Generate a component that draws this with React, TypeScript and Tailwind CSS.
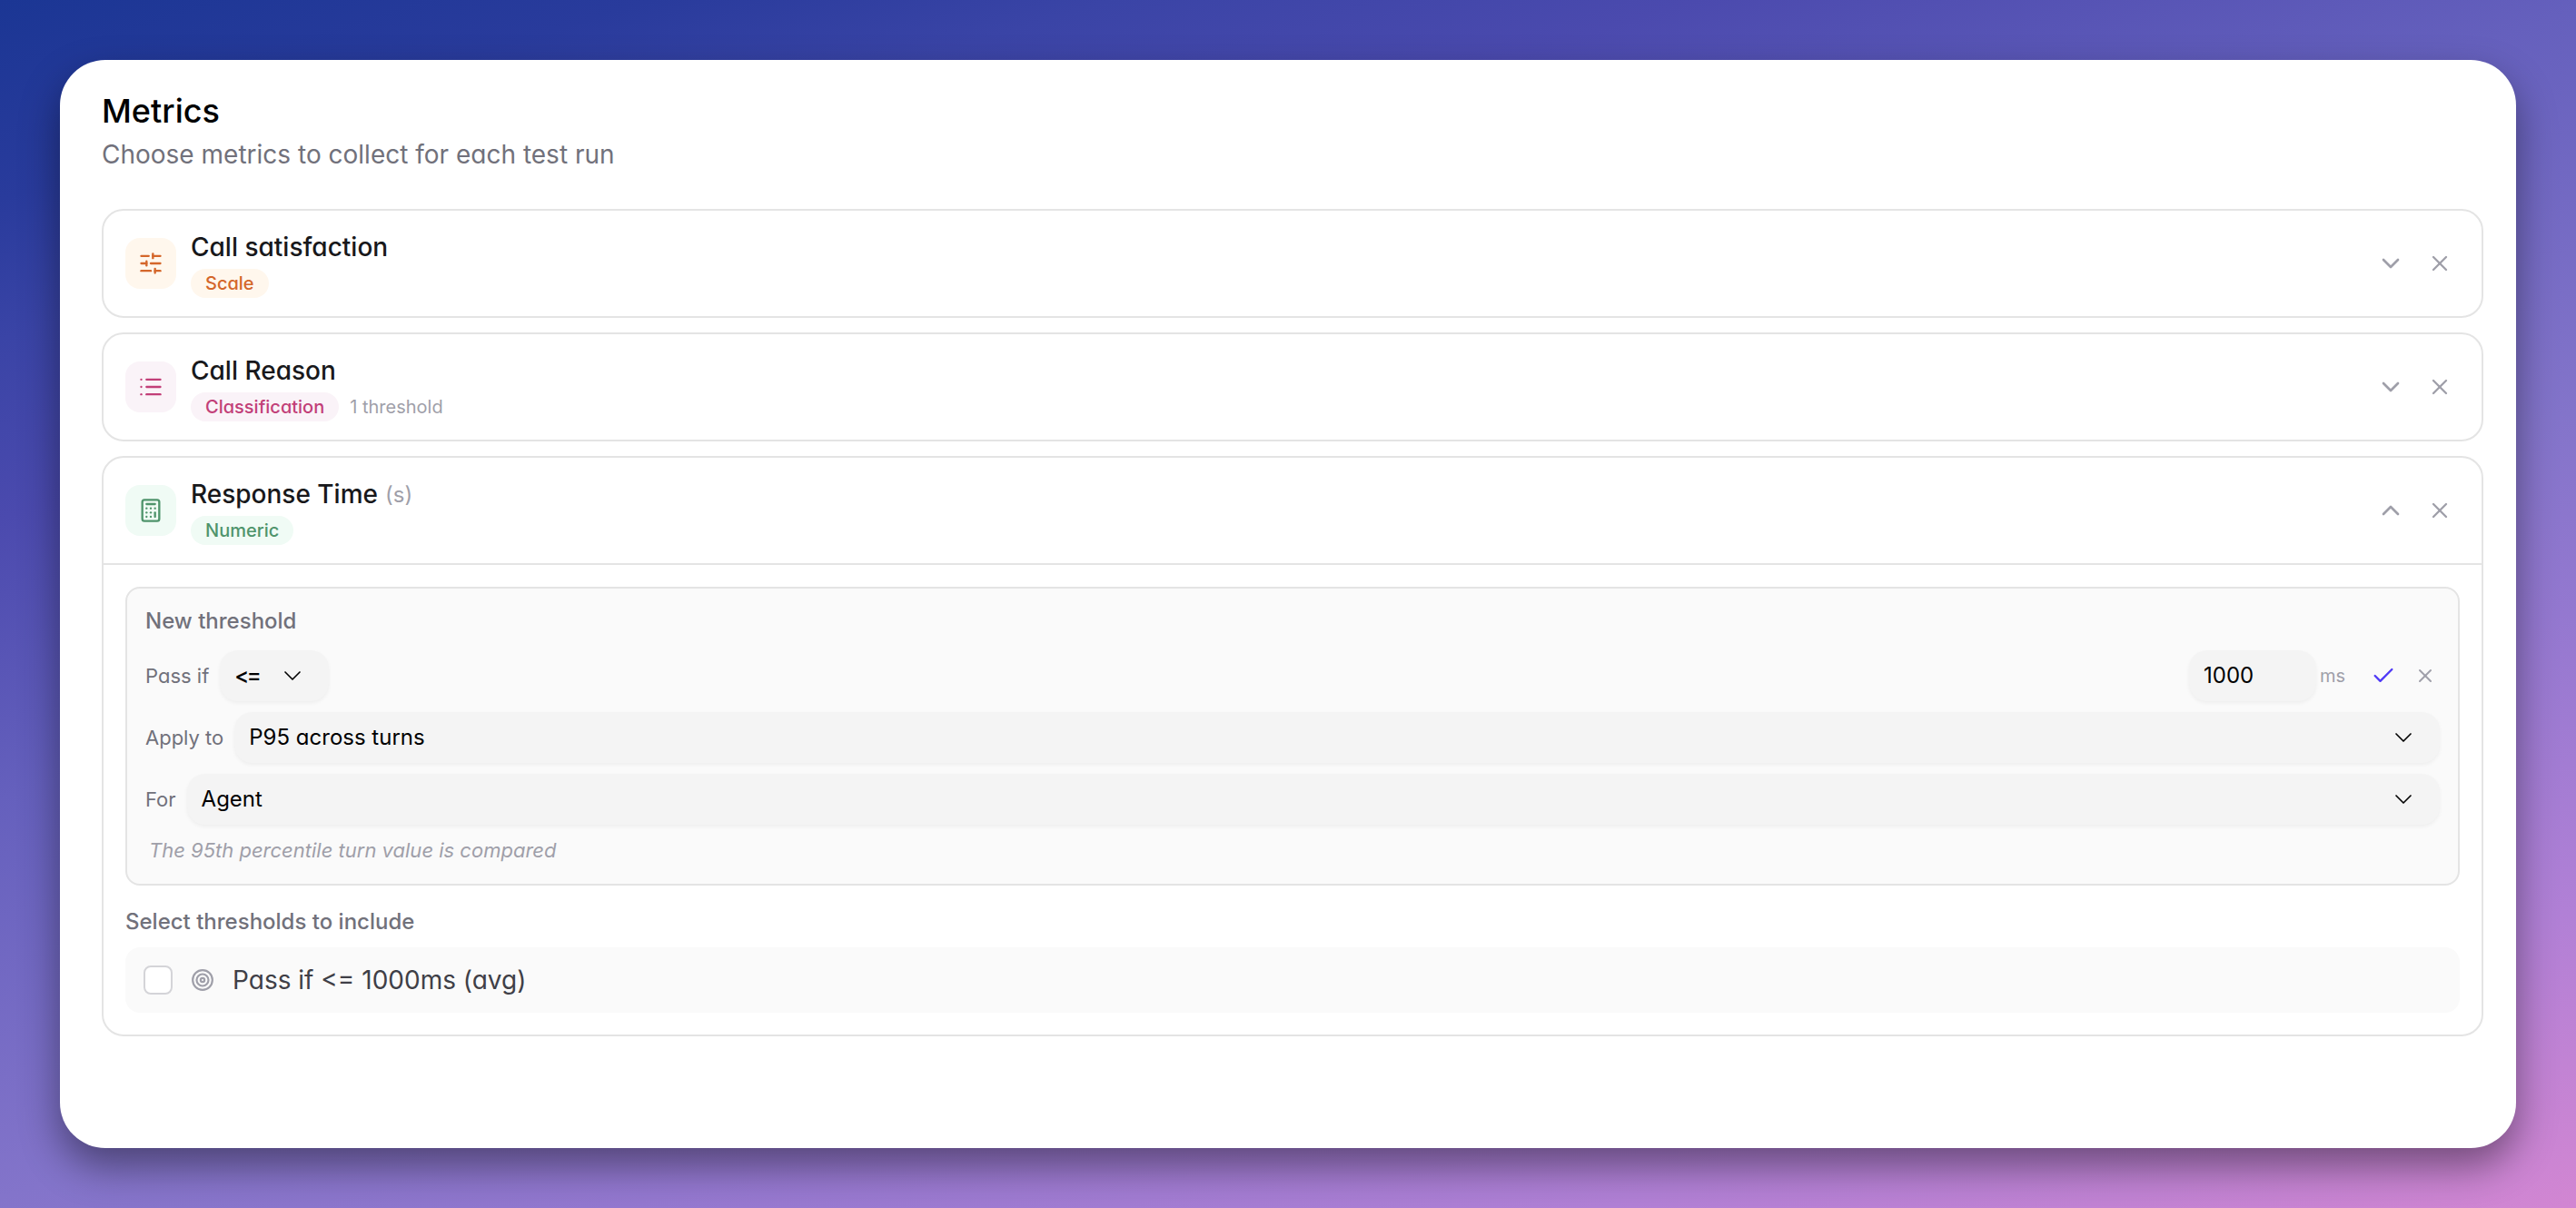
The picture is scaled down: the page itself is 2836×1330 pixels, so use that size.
import {
  Calculator,
  Check,
  ChevronDown,
  ChevronUp,
  List,
  SlidersHorizontal,
  Target,
  X,
  type LucideIcon,
} from "lucide-react";

interface MetricHeaderProps {
  icon: LucideIcon;
  tone: string;
  title: string;
  unit?: string;
  type: string;
  note?: string;
  open?: boolean;
}

const MetricHeader: React.FC<MetricHeaderProps> = ({
  icon: Icon,
  tone,
  title,
  unit,
  type,
  note,
  open,
}) => {
  const Chevron = open ? ChevronUp : ChevronDown;

  return (
    <div className="flex h-[116px] items-center px-6">
      <div
        className={`flex size-14 shrink-0 items-center justify-center rounded-2xl ${tone}`}
      >
        <Icon size={28} />
      </div>
      <div className="ml-4 flex flex-1 flex-col">
        <div className="flex h-10 items-center text-[28px] font-medium text-zinc-900">
          {title}
          {unit && (
            <span className="ml-2 pt-0.5 text-[24px] font-normal text-zinc-400">
              {unit}
            </span>
          )}
        </div>
        <div className="mt-1 flex h-8 items-center gap-3">
          <span
            className={`flex h-8 items-center rounded-full px-4 text-[20px] font-medium ${tone}`}
          >
            {type}
          </span>
          {note && <span className="text-[20px] text-zinc-400">{note}</span>}
        </div>
      </div>
      <div className="flex items-center gap-4 text-zinc-400">
        <Chevron size={32} />
        <button className="p-2">
          <X size={28} />
        </button>
      </div>
    </div>
  );
};

const Select = ({ value, className }: { value: string; className: string }) => (
  <button
    className={`flex h-14 items-center justify-between rounded-[20px] bg-[#f4f4f4] pr-6 pl-4 text-[24px] text-black shadow-[0_2px_4px_rgba(0,0,0,0.05)] ${className}`}
  >
    <span className="pb-0.5">{value}</span>
    <ChevronDown size={32} strokeWidth={1.25} className="shrink-0" />
  </button>
);

const Card = ({ children }: { children: React.ReactNode }) => (
  <div className="rounded-3xl border-2 border-[#e4e4e4]">{children}</div>
);

export default function App() {
  return (
    <div className="h-[1330px] w-[2836px] bg-[linear-gradient(163deg,#1b3694_0%,#293b9c_10%,#3a44a6_17%,#4b4aae_26%,#6560bd_40%,#8374ca_60%,#9478d0_70%,#b180d6_85%,#d286d2_100%)] p-[66px] font-['Inter',sans-serif] [font-feature-settings:'cv11']">
      <div className="h-[1198px] rounded-[50px] bg-white pt-8 pr-9 pl-[46px] shadow-[0_20px_44px_rgba(0,0,0,0.42)]">
        <h1 className="h-12 text-[36px] leading-[48px] font-medium text-black">
          Metrics
        </h1>
        <p className="mt-1 h-10 text-[28px] leading-10 text-zinc-500">
          Choose metrics to collect for each test run
        </p>

        <div className="mt-10 flex flex-col gap-4">
          <Card>
            <MetricHeader
              icon={SlidersHorizontal}
              tone="bg-[#fff7ed] text-[#d4662a]"
              title="Call satisfaction"
              type="Scale"
            />
          </Card>
          <Card>
            <MetricHeader
              icon={List}
              tone="bg-[#faf3f8] text-[#c23f78]"
              title="Call Reason"
              type="Classification"
              note="1 threshold"
            />
          </Card>
          <Card>
            <MetricHeader
              icon={Calculator}
              tone="bg-[#f0fbf5] text-[#4f946c]"
              title="Response Time"
              unit="(s)"
              type="Numeric"
              open
            />
            <div className="border-t-2 border-[#e4e4e4] p-6">
              <div className="flex flex-col gap-3 rounded-2xl border-2 border-[#e4e4e4] bg-[#fafafa] p-5 text-[22px] leading-[33px] text-zinc-500">
                <div className="mb-1 text-[24px] leading-8 font-medium">
                  New threshold
                </div>
                <div className="flex items-center">
                  Pass if
                  <Select
                    value="<="
                    className="ml-3 w-[120px] font-medium tracking-[-2.5px]"
                  />
                  <input
                    className="ml-auto h-14 w-[140px] rounded-[20px] bg-[#f4f4f4] px-4 pb-0.5 text-[24px] text-black shadow-[0_2px_4px_rgba(0,0,0,0.05)]"
                    defaultValue="1000"
                  />
                  <span className="ml-1 w-7 text-[20px] text-zinc-400">ms</span>
                  <button className="ml-6 p-1 text-indigo-600">
                    <Check size={28} />
                  </button>
                  <button className="ml-3 p-1 text-zinc-400">
                    <X size={24} />
                  </button>
                </div>
                <div className="flex items-center gap-3">
                  Apply to
                  <Select value="P95 across turns" className="flex-1" />
                </div>
                <div className="flex items-center gap-3">
                  For
                  <Select value="Agent" className="flex-1" />
                </div>
                <div className="pl-1 text-zinc-400 italic">
                  The 95th percentile turn value is compared
                </div>
              </div>

              <div className="mt-6 text-[24px] leading-8 font-medium text-zinc-500">
                Select thresholds to include
              </div>
              <div className="mt-3 flex h-[72px] items-center rounded-2xl bg-[#fafafa] px-5">
                <span className="size-8 rounded-lg border-2 border-zinc-300 bg-white" />
                <Target size={26} className="ml-5 text-zinc-400" />
                <span className="ml-5 text-[28px] text-zinc-700">
                  Pass if &lt;= 1000ms (avg)
                </span>
              </div>
            </div>
          </Card>
        </div>
      </div>
    </div>
  );
}
